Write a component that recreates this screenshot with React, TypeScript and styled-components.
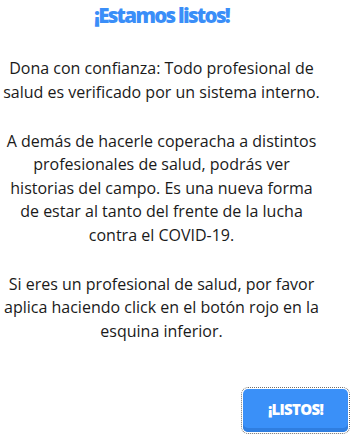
import React from "react";
import styled, { createGlobalStyle } from "styled-components";

const Global = createGlobalStyle`
  html, body { margin: 0; padding: 0; background: #ffffff; }
  body { font-family: "Open Sans", "Noto Sans", sans-serif; }
`;

const Page = styled.div`
  width: 356px;
  height: 437px;
  display: flex;
  flex-direction: column;
  box-sizing: border-box;
`;

const Content = styled.div`
  width: 323px;
  display: flex;
  flex-direction: column;
  align-items: center;
  text-align: center;
`;

const Title = styled.h1`
  margin: 2px 0 0 0;
  font-family: "Open Sans", sans-serif;
  font-weight: 800;
  font-size: 20.5px;
  letter-spacing: -1.7px;
  line-height: 26px;
  color: #3a8ef8;
`;

const Paragraph = styled.p`
  margin: 0;
  font-size: 16px;
  line-height: 23.5px;
  color: #1a1a1a;
  & + & { margin-top: 25.5px; }
`;

const Body = styled.div`
  margin-top: 29px;
  display: flex;
  flex-direction: column;
`;

const Footer = styled.div`
  margin-top: auto;
  display: flex;
  justify-content: flex-end;
  padding: 0 8px 5px 0;
`;

const Button = styled.button`
  width: 105px;
  height: 43px;
  border: none;
  border-radius: 5px;
  background: #3a90f8;
  box-shadow: inset 0 -4px 0 #2f7ee0;
  color: #ffffff;
  font-family: "Open Sans", sans-serif;
  font-weight: 800;
  font-size: 15px;
  letter-spacing: -0.7px;
  outline: 1px dotted #707070;
  outline-offset: 1px;
  cursor: pointer;
  padding: 0 0 3px 0;
`;

export default function App() {
  return (
    <>
      <Global />
      <Page>
        <Content>
          <Title>¡Estamos listos!</Title>
          <Body>
            <Paragraph>
              Dona con confianza: Todo profesional de salud es verificado por un sistema interno.
            </Paragraph>
            <Paragraph>
              A demás de hacerle coperacha a distintos profesionales de salud, podrás ver historias del campo. Es una nueva forma de estar al tanto del frente de la lucha contra el COVID-19.
            </Paragraph>
            <Paragraph>
              Si eres un profesional de salud, por favor aplica haciendo click en el botón rojo en la esquina inferior.
            </Paragraph>
          </Body>
        </Content>
        <Footer>
          <Button>¡LISTOS!</Button>
        </Footer>
      </Page>
    </>
  );
}
